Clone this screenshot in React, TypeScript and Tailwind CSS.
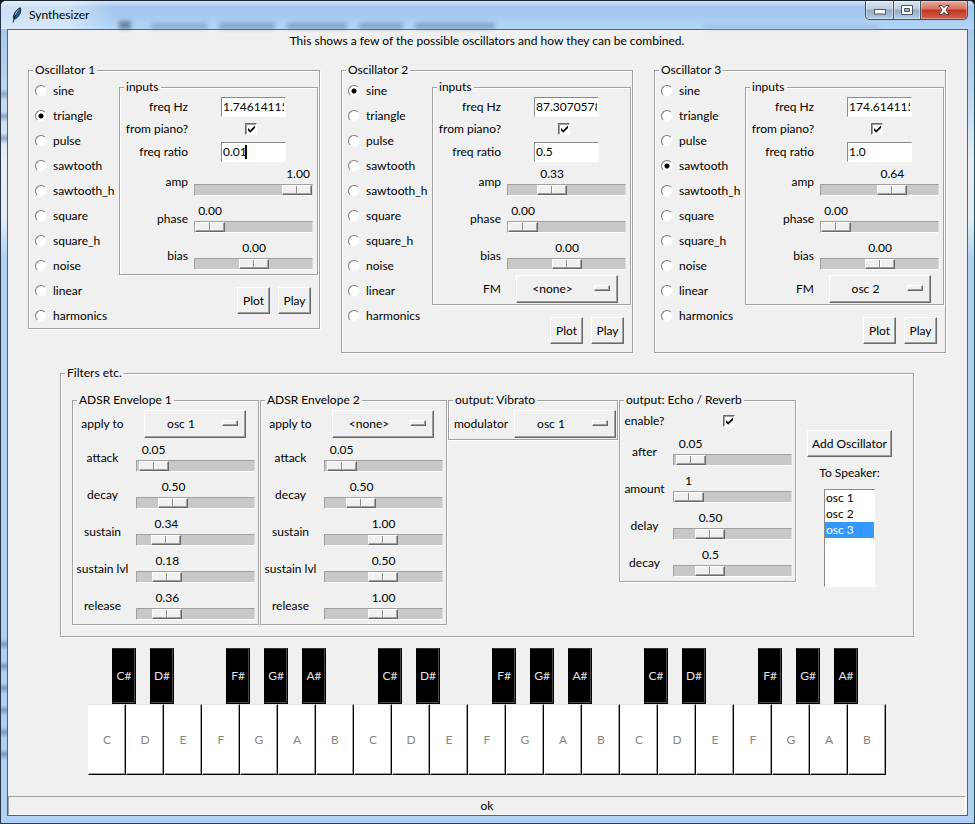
import { useId, useState } from "react";
import type { ReactNode } from "react";

const WAVES = ["sine", "triangle", "pulse", "sawtooth", "sawtooth_h", "square", "square_h", "noise", "linear", "harmonics"];
const THUMB_TRAVEL = 88;

const raised =
  "border border-t-white border-l-white border-b-[#696969] border-r-[#696969] bg-[#f0f0f0] shadow-[inset_-1px_-1px_0_#a0a0a0]";
const sunken = "border border-t-[#8a8a8a] border-l-[#8a8a8a] border-b-white border-r-white";

function Group({ title, className = "", children }: { title: string; className?: string; children: ReactNode }) {
  return (
    <fieldset className={`min-w-0 border border-[#a0a0a0] shadow-[1px_1px_0_#fff,inset_1px_1px_0_#fff] ${className}`}>
      <legend className="ml-1 bg-[#f0f0f0] px-0.5 leading-4">{title}</legend>
      {children}
    </fieldset>
  );
}

function Row({ label, id, align, height, children }: { label: string; id: string; align: string; height: string; children: ReactNode }) {
  return (
    <div className={`flex items-center ${height}`}>
      <label htmlFor={id} className={`shrink-0 whitespace-nowrap ${align}`}>
        {label}
      </label>
      <div className="flex flex-1 justify-center">{children}</div>
    </div>
  );
}

type ScaleProps = { label: string; value: string; max?: number; min?: number; align: string };

function Scale({ label, value, min = 0, max = 1, align }: ScaleProps) {
  const id = useId();
  const [current, setCurrent] = useState(Number(value));
  const decimals = (value.split(".")[1] ?? "").length;
  const offset = ((current - min) / (max - min)) * THUMB_TRAVEL;
  return (
    <Row label={label} id={id} align={align} height="h-[37px]">
      <div className="flex h-[37px] w-[119px] flex-col gap-0.5 pt-[3px]">
        <output htmlFor={id} className="w-8 text-center leading-4" style={{ marginLeft: offset }}>
          {current.toFixed(decimals)}
        </output>
        <input
          id={id}
          type="range"
          min={min}
          max={max}
          step={0.01}
          value={current}
          onChange={(e) => setCurrent(Number(e.target.value))}
          className="block h-3 w-full appearance-none border border-t-[#a0a0a0] border-l-[#a0a0a0] border-r-[#dcdcdc] border-b-white bg-[#c8c8c8] [&::-webkit-slider-thumb]:h-[10px] [&::-webkit-slider-thumb]:w-[30px] [&::-webkit-slider-thumb]:appearance-none [&::-webkit-slider-thumb]:border [&::-webkit-slider-thumb]:border-t-white [&::-webkit-slider-thumb]:border-r-[#696969] [&::-webkit-slider-thumb]:border-b-[#696969] [&::-webkit-slider-thumb]:border-l-white [&::-webkit-slider-thumb]:bg-[linear-gradient(to_right,#f0f0f0_13px,#8a8a8a_13px,#8a8a8a_14px,#fff_14px,#fff_15px,#f0f0f0_15px)] [&::-webkit-slider-thumb]:shadow-[inset_-1px_-1px_0_#a0a0a0]"
        />
      </div>
    </Row>
  );
}

function Dropdown({ id, value }: { id: string; value: string }) {
  return (
    <div className="relative h-7 w-[102px]">
      <select
        id={id}
        defaultValue={value}
        className={`h-full w-full appearance-none pr-7 text-center [text-align-last:center] ${raised}`}
      >
        <option>&lt;none&gt;</option>
        <option>osc 1</option>
        <option>osc 2</option>
        <option>osc 3</option>
      </select>
      <span className={`pointer-events-none absolute top-2.5 right-2 h-[6px] w-4 ${raised}`} />
    </div>
  );
}

function Tick({ id }: { id: string }) {
  return (
    <span className="relative mr-1.5 flex size-3">
      <input
        id={id}
        type="checkbox"
        defaultChecked
        className="peer size-3 appearance-none border border-t-[#696969] border-r-white border-b-white border-l-[#696969] bg-white shadow-[inset_1px_1px_0_#a0a0a0]"
      />
      <svg viewBox="0 0 12 12" className="pointer-events-none absolute inset-0 hidden size-3 peer-checked:block" aria-hidden="true">
        <path d="M3 5v2.6l2.2 2.2L10 5V2.4L5.2 7.2z" fill="#000" />
      </svg>
    </span>
  );
}

function Entry({ id, value, caret = false }: { id: string; value: string; caret?: boolean }) {
  return (
    <span className="relative flex h-5 w-[65px]">
      <input id={id} type="text" defaultValue={value} className={`w-full bg-white px-px ${sunken}`} />
      {caret && <span className="absolute top-[3px] left-6 h-[14px] w-0.5 bg-black" />}
    </span>
  );
}

function Button({ children }: { children: ReactNode }) {
  return (
    <button type="button" className={`h-[27px] min-w-[33px] px-1 ${raised}`}>
      {children}
    </button>
  );
}

type OscProps = { n: number; wave: string; freq: string; ratio: string; amp: string; fm?: string; caret?: boolean };

function Oscillator({ n, wave, freq, ratio, amp, fm, caret }: OscProps) {
  const id = useId();
  const align = "w-[70px] pr-0.5 text-right";
  return (
    <Group title={`Oscillator ${n}`} className="w-[292px]">
      <div className="flex">
        <div className="w-[90px] shrink-0">
          {WAVES.map((w) => (
            <label key={w} className="flex h-[25px] items-center gap-1.5 pl-1.5">
              <input
                type="radio"
                name={`wave-${n}`}
                defaultChecked={w === wave}
                className="size-3 shrink-0 appearance-none rounded-full border border-t-[#7a7a7a] border-r-[#f4f4f4] border-b-[#f4f4f4] border-l-[#7a7a7a] bg-white checked:bg-[radial-gradient(circle,#000_2px,#fff_3px)]"
              />
              {w}
            </label>
          ))}
        </div>
        <div className="mr-px flex flex-1 flex-col pt-px pb-2">
          <Group title="inputs">
            <Row label="freq Hz" id={`${id}-f`} align={align} height="h-[23px]">
              <Entry id={`${id}-f`} value={freq} />
            </Row>
            <Row label="from piano?" id={`${id}-p`} align={align} height="h-[22px]">
              <Tick id={`${id}-p`} />
            </Row>
            <Row label="freq ratio" id={`${id}-r`} align={align} height="h-[23px]">
              <Entry id={`${id}-r`} value={ratio} caret={caret} />
            </Row>
            <Scale label="amp" value={amp} align={align} />
            <Scale label="phase" value="0.00" align={align} />
            <Scale label="bias" value="0.00" min={-1} align={align} />
            {fm && (
              <Row label="FM" id={`${id}-fm`} align={align} height="h-[30px]">
                <Dropdown id={`${id}-fm`} value={fm} />
              </Row>
            )}
          </Group>
          <div className="mt-3 flex justify-end gap-2 pr-[7px]">
            <Button>Plot</Button>
            <Button>Play</Button>
          </div>
        </div>
      </div>
    </Group>
  );
}

function Envelope({ n, target, sustain, level, release }: { n: number; target: string; sustain: string; level: string; release: string }) {
  const id = useId();
  const align = "w-[59px] text-center";
  return (
    <Group title={`ADSR Envelope ${n}`} className="w-[187px]">
      <Row label="apply to" id={id} align={align} height="h-[31px]">
        <Dropdown id={id} value={target} />
      </Row>
      <Scale label="attack" value="0.05" max={2} align={align} />
      <Scale label="decay" value="0.50" max={2} align={align} />
      <Scale label="sustain" value={sustain} max={2} align={align} />
      <Scale label="sustain lvl" value={level} align={align} />
      <Scale label="release" value={release} max={2} align={align} />
    </Group>
  );
}

function Filters() {
  const echo = "w-[49px] text-center";
  return (
    <Group title="Filters etc." className="mx-auto w-[854px]">
      <div className="flex items-stretch gap-px py-[11px] pl-[11px]">
        <Envelope n={1} target="osc 1" sustain="0.34" level="0.18" release="0.36" />
        <Envelope n={2} target="<none>" sustain="1.00" level="0.50" release="1.00" />
        <div>
          <Group title="output: Vibrato" className="w-[170px]">
            <Row label="modulator" id="modulator" align="w-16 text-center" height="h-[31px]">
              <Dropdown id="modulator" value="osc 1" />
            </Row>
          </Group>
        </div>
        <div>
          <Group title="output: Echo / Reverb" className="w-[177px]">
            <Row label="enable?" id="enable" align={echo} height="h-[25px]">
              <Tick id="enable" />
            </Row>
            <Scale label="after" value="0.05" max={2} align={echo} />
            <Scale label="amount" value="1" min={1} max={10} align={echo} />
            <Scale label="delay" value="0.50" max={2} align={echo} />
            <Scale label="decay" value="0.5" max={2} align={echo} />
          </Group>
        </div>
        <div className="flex flex-1 flex-col items-center justify-center gap-2 pr-[11px]">
          <Button>Add Oscillator</Button>
          <label htmlFor="speaker" className="leading-4">
            To Speaker:
          </label>
          <select
            id="speaker"
            size={6}
            defaultValue="osc 3"
            className={`h-[98px] w-[51px] overflow-hidden bg-white ${sunken}`}
          >
            {["osc 1", "osc 2", "osc 3"].map((o) => (
              <option
                key={o}
                className="h-4 min-h-0 p-0 px-px leading-4 checked:bg-[linear-gradient(#3399ff,#3399ff)] checked:text-white"
              >
                {o}
              </option>
            ))}
          </select>
        </div>
      </div>
    </Group>
  );
}

const OCTAVES = [0, 1, 2];

function Piano() {
  return (
    <div className="mx-auto mt-[11px] w-[798px]">
      <div className="flex pl-[17px]">
        {OCTAVES.map((o) =>
          ["C#", "D#", "", "F#", "G#", "A#", ""].map((k, i) => (
            <div key={`${o}-${i}`} className="flex w-[38px] shrink-0 justify-center last:w-5">
              {k && (
                <button
                  type="button"
                  className="h-14 w-6 border border-t-[#333] border-r-black border-b-black border-l-black bg-black text-[#e4e4e4] shadow-[inset_-1px_-1px_0_#4a4a4a]"
                >
                  {k}
                </button>
              )}
            </div>
          )),
        )}
      </div>
      <div className="flex">
        {OCTAVES.map((o) =>
          ["C", "D", "E", "F", "G", "A", "B"].map((k) => (
            <button
              key={`${o}-${k}`}
              type="button"
              className="h-[71px] w-[38px] border border-t-[#e4e4e4] border-r-black border-b-black border-l-white bg-white text-[#868686] shadow-[inset_-1px_-1px_0_#a0a0a0]"
            >
              {k}
            </button>
          )),
        )}
      </div>
    </div>
  );
}

function TitleBar() {
  return (
    <header className="relative flex h-7 items-start bg-[linear-gradient(to_bottom,#cfe4fb_0,#a3c8ee_6px,#a6cbf0_16px,#b7d6f8_28px)]">
      <div className="pointer-events-none absolute inset-x-0 bottom-0 flex h-3 items-end overflow-hidden pl-[118px] opacity-55 blur-[2px]" aria-hidden="true">
        <i className="mr-5 h-2 w-3 bg-[#2c4059]" />
        <i className="mr-3 h-1.5 w-14 bg-[#6d8cad]" />
        <i className="mr-3 h-1.5 w-14 bg-[#5d7c9d]" />
        <i className="mr-3 h-1.5 w-15 bg-[#5d7c9d]" />
        <i className="mr-3 h-1.5 w-11 bg-[#5d7c9d]" />
        <i className="h-1.5 w-20 bg-[#5d7c9d]" />
        <i className="ml-[208px] h-1 w-44 bg-[#8aaacb]" />
      </div>
      <div className="pointer-events-none absolute inset-y-0 left-0 w-28 bg-[linear-gradient(to_right,rgba(255,255,255,.45)_60%,transparent)]" />
      <div className="relative flex h-7 flex-1 items-center gap-1.5 pl-2.5">
        <svg viewBox="0 0 12 16" className="h-4 w-3" aria-hidden="true">
          <path d="M9.500.8C6 2 2.800 5.500 2.200 11l1.300 1.200C7.500 10.500 10.500 6 9.500.8z" fill="#2f5f94" stroke="#14233a" strokeWidth="1" />
          <path d="M8.200 3C5.500 6 3.500 9.500 2 15.500" fill="none" stroke="#0d1420" strokeWidth="1" />
          <path d="M7.500 2.700 4.200 7.500" stroke="#a9cdf0" strokeWidth="1" />
        </svg>
        <h1>Synthesizer</h1>
      </div>
      <div className="relative mr-1.5 flex h-[19px] overflow-hidden rounded-b-[5px] border border-t-0 border-[#3d4f66] bg-[#3d4f66]">
        <button
          type="button"
          aria-label="Minimize"
          className="flex w-7 items-center justify-center border-r border-[#3d4f66] bg-[linear-gradient(#dbe6f2_0,#bccbdd_45%,#94abc6_50%,#b5cce6_100%)] shadow-[inset_0_0_0_1px_rgba(255,255,255,.45)]"
        >
          <svg viewBox="0 0 12 6" className="mt-1 h-1.5 w-3" aria-hidden="true">
            <rect x=".5" y=".5" width="11" height="4.500" fill="#fff" stroke="#4a5568" />
          </svg>
        </button>
        <button
          type="button"
          aria-label="Maximize"
          className="flex w-[27px] items-center justify-center border-r border-[#3d4f66] bg-[linear-gradient(#dbe6f2_0,#bccbdd_45%,#94abc6_50%,#b5cce6_100%)] shadow-[inset_0_0_0_1px_rgba(255,255,255,.45)]"
        >
          <svg viewBox="0 0 12 10" className="h-2.5 w-3" aria-hidden="true">
            <path d="M.5.5h11v9H.5zM3.500 3.500h5v3h-5z" fill="#fff" fillRule="evenodd" stroke="#4a5568" />
          </svg>
        </button>
        <button
          type="button"
          aria-label="Close"
          className="flex w-[46px] items-center justify-center bg-[linear-gradient(#e9aa9c_0,#d6705c_45%,#bf3421_50%,#d4634a_100%)] shadow-[inset_0_0_0_1px_rgba(255,255,255,.35)]"
        >
          <svg viewBox="0 0 12 10" className="h-2.5 w-3" aria-hidden="true">
            <path d="M.8.500h3.200L6 2.700 8 .500h3.200L7.900 5l3.300 4.500H8L6 7.300 4 9.500H.8L4.100 5z" fill="#fff" stroke="#53343a" strokeWidth=".9" />
          </svg>
        </button>
      </div>
    </header>
  );
}

export default function App() {
  return (
    <div className="flex min-h-screen w-full flex-col bg-[#10161f] font-['Lato','Open_Sans',sans-serif] text-xs text-black">
      <div className="flex flex-1 flex-col overflow-hidden rounded-t-md border border-t-[#1b2433] border-r-[#1d4a55] border-b-[#26404c] border-l-[#27344a] bg-[#b4d4f6]">
        <TitleBar />
        <div className="flex flex-1 bg-[repeating-linear-gradient(to_bottom,transparent_0,transparent_6px,#7f9cc2_11px,transparent_17px,transparent_22px),repeating-linear-gradient(to_bottom,transparent_0,transparent_6px,#8ba6c8_11px,transparent_17px,transparent_22px),linear-gradient(to_bottom,#a9c8ea_0,#bcd4ee_60px,#e6eef7_130px,#e3edf8_190px,#b0cff2_230px)] bg-[length:6px_132px,6px_66px,100%_100%] bg-[position:0_calc(100%-58px),0_54px,0_0] bg-no-repeat px-1.5 pb-[7px]">
          <main className="flex flex-1 flex-col border border-[#4d6580] bg-[#f0f0f0] pr-px">
            <p className="pt-[3px] text-center leading-4">
              This shows a few of the possible oscillators and how they can be combined.
            </p>
            <div className="mt-[13px] flex items-start justify-center gap-[21px]">
              <Oscillator n={1} wave="triangle" freq="1.74614115713" ratio="0.01" amp="1.00" caret />
              <Oscillator n={2} wave="sine" freq="87.3070578568" ratio="0.5" amp="0.33" fm="<none>" />
              <Oscillator n={3} wave="sawtooth" freq="174.614115713" ratio="1.0" amp="0.64" fm="osc 2" />
            </div>
            <div className="mt-3">
              <Filters />
            </div>
            <Piano />
            <footer className="mt-auto h-[19px] border border-t-[#a0a0a0] border-r-white border-b-white border-l-[#a0a0a0] text-center leading-[18px]">
              ok
            </footer>
          </main>
        </div>
      </div>
    </div>
  );
}
